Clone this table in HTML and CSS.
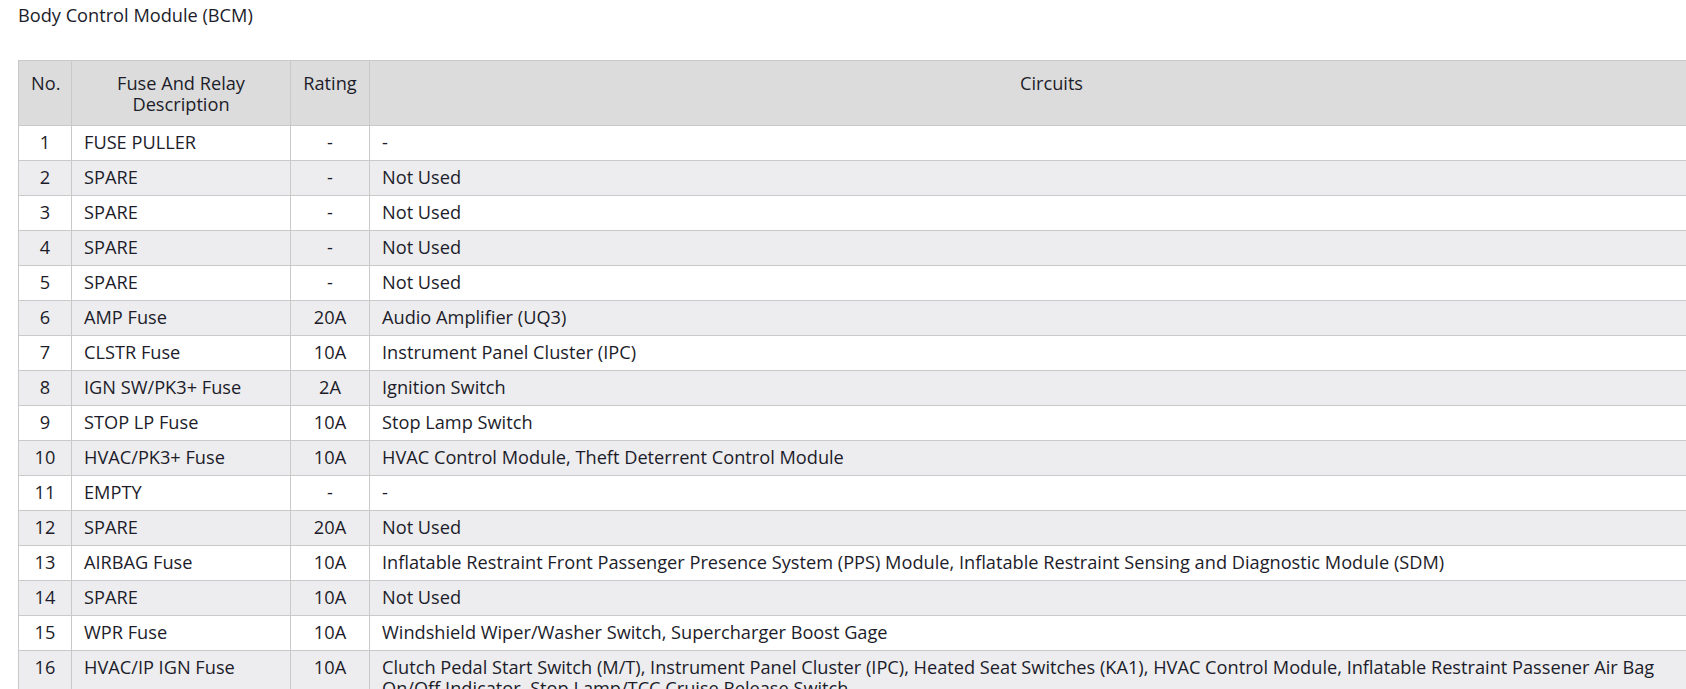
FILE: index.html
```html
<!DOCTYPE html>
<html lang="en">
<head>
<meta charset="utf-8">
<title>Body Control Module (BCM)</title>
<link rel="stylesheet" href="styles.css">
</head>
<body>
<div class="page">
  <div class="title">Body Control Module (BCM)</div>
  <table class="fuse-table">
    <colgroup>
      <col class="c-no">
      <col class="c-desc">
      <col class="c-rating">
      <col class="c-circ">
    </colgroup>
    <thead>
      <tr>
        <th>No.</th>
        <th>Fuse And Relay Description</th>
        <th>Rating</th>
        <th>Circuits</th>
      </tr>
    </thead>
    <tbody>
      <tr><td class="num">1</td><td>FUSE PULLER</td><td class="rat">-</td><td class="circ">-</td></tr>
      <tr><td class="num">2</td><td>SPARE</td><td class="rat">-</td><td class="circ">Not Used</td></tr>
      <tr><td class="num">3</td><td>SPARE</td><td class="rat">-</td><td class="circ">Not Used</td></tr>
      <tr><td class="num">4</td><td>SPARE</td><td class="rat">-</td><td class="circ">Not Used</td></tr>
      <tr><td class="num">5</td><td>SPARE</td><td class="rat">-</td><td class="circ">Not Used</td></tr>
      <tr><td class="num">6</td><td>AMP Fuse</td><td class="rat">20A</td><td class="circ">Audio Amplifier (UQ3)</td></tr>
      <tr><td class="num">7</td><td>CLSTR Fuse</td><td class="rat">10A</td><td class="circ">Instrument Panel Cluster (IPC)</td></tr>
      <tr><td class="num">8</td><td>IGN SW/PK3+ Fuse</td><td class="rat">2A</td><td class="circ">Ignition Switch</td></tr>
      <tr><td class="num">9</td><td>STOP LP Fuse</td><td class="rat">10A</td><td class="circ">Stop Lamp Switch</td></tr>
      <tr><td class="num">10</td><td>HVAC/PK3+ Fuse</td><td class="rat">10A</td><td class="circ">HVAC Control Module, Theft Deterrent Control Module</td></tr>
      <tr><td class="num">11</td><td>EMPTY</td><td class="rat">-</td><td class="circ">-</td></tr>
      <tr><td class="num">12</td><td>SPARE</td><td class="rat">20A</td><td class="circ">Not Used</td></tr>
      <tr><td class="num">13</td><td>AIRBAG Fuse</td><td class="rat">10A</td><td class="circ">Inflatable Restraint Front Passenger Presence System (PPS) Module, Inflatable Restraint Sensing and Diagnostic Module (SDM)</td></tr>
      <tr><td class="num">14</td><td>SPARE</td><td class="rat">10A</td><td class="circ">Not Used</td></tr>
      <tr><td class="num">15</td><td>WPR Fuse</td><td class="rat">10A</td><td class="circ">Windshield Wiper/Washer Switch, Supercharger Boost Gage</td></tr>
      <tr><td class="num">16</td><td>HVAC/IP IGN Fuse</td><td class="rat">10A</td><td class="circ">Clutch Pedal Start Switch (M/T), Instrument Panel Cluster (IPC), Heated Seat Switches (KA1), HVAC Control Module, Inflatable Restraint Passener Air Bag On/Off Indicator, Stop Lamp/TCC Cruise Release Switch</td></tr>
    </tbody>
  </table>
</div>
</body>
</html>
```

FILE: styles.css
```css
html, body {
  margin: 0;
  padding: 0;
  overflow: hidden;
  background: #ffffff;
}

body {
  font-family: "Open Sans", "Noto Sans", sans-serif;
  font-size: 18.2px;
  line-height: 21px;
  color: #1c1c2a;
}

.page {
  padding: 5px 0 0 18px;
}

.title {
  margin: 0 0 34px 0;
}

.fuse-table {
  border-collapse: collapse;
  table-layout: fixed;
  width: 1715px;
}

.c-no { width: 53px; }
.c-desc { width: 219px; }
.c-rating { width: 79px; }
.c-circ { width: 1364px; }

.fuse-table th,
.fuse-table td {
  border: 1px solid #c9c9c9;
}

.fuse-table th {
  background: #dcdcdc;
  font-weight: normal;
  text-align: center;
  vertical-align: top;
  padding: 12px 12px 10px;
}

.fuse-table td {
  padding: 6px 12px 7px;
  vertical-align: top;
  text-align: left;
}

.fuse-table td.circ {
  padding-right: 30px;
}

.fuse-table tbody tr:nth-child(odd) td {
  background: #ffffff;
}

.fuse-table tbody tr:nth-child(even) td {
  background: #ededef;
}

.fuse-table td.num,
.fuse-table td.rat {
  text-align: center;
}
```
